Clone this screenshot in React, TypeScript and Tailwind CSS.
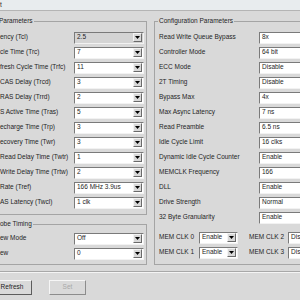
import React from "react";

const leftRows: [string, string][] = [
  ["ency (Tcl)", "2.5"],
  ["cle Time (Trc)", "7"],
  ["fresh Cycle Time (Trfc)", "11"],
  ["CAS Delay (Trcd)", "3"],
  ["RAS Delay (Trrd)", "2"],
  ["S Active Time (Tras)", "5"],
  ["echarge Time (Trp)", "3"],
  ["ecovery Time (Twr)", "3"],
  ["Read Delay Time (Twtr)", "1"],
  ["Write Delay Time (Trtw)", "2"],
  ["Rate (Tref)", "166 MHz 3.9us"],
  ["AS Latency (Twcl)", "1 clk"],
];

const configRows: [string, string][] = [
  ["Read Write Queue Bypass", "8x"],
  ["Controller Mode", "64 bit"],
  ["ECC Mode", "Disable"],
  ["2T Timing", "Disable"],
  ["Bypass Max", "4x"],
  ["Max Async Latency", "7 ns"],
  ["Read Preamble", "6.5 ns"],
  ["Idle Cycle Limit", "16 clks"],
  ["Dynamic Idle Cycle Counter", "Enable"],
  ["MEMCLK Frequency", "166"],
  ["DLL", "Enable"],
  ["Drive Strength", "Normal"],
  ["32 Byte Granularity", "Enable"],
];

function Arrow() {
  return (
    <span className="flex h-[9px] w-[9px] shrink-0 items-center justify-center border border-t-[#f4f4f4] border-l-[#f4f4f4] border-b-[#6a6a6a] border-r-[#6a6a6a] bg-[#d8d8d8] mr-[1px]">
      <svg width="5" height="3" viewBox="0 0 5 3">
        <polygon points="0,0 5,0 2.5,3" fill="#000" />
      </svg>
    </span>
  );
}

function Combo({
  value,
  arrow = true,
  gray = false,
  className = "",
}: {
  value: string;
  arrow?: boolean;
  gray?: boolean;
  className?: string;
}) {
  return (
    <div
      className={`flex h-[12px] items-center border border-t-[#7a7a7a] border-l-[#7a7a7a] border-b-[#f2f2f2] border-r-[#f2f2f2] ${
        gray ? "bg-[#d4d4d4]" : "bg-white"
      } ${className}`}
    >
      <span className="flex-1 overflow-hidden whitespace-nowrap pl-[2px] leading-none">{value}</span>
      {arrow && <Arrow />}
    </div>
  );
}

export default function App() {
  return (
    <div className="flex h-[300px] w-[300px] flex-col overflow-hidden bg-[#d9d9d9] font-['Liberation_Sans',Arial,sans-serif] text-[6.5px] text-[#1e1e1e]">
      {/* title strip */}
      <div className="h-[11px] shrink-0 border-b border-[#b4b4b4] bg-[#e8ecee] pt-[2px] leading-none">t</div>

      <div className="flex shrink-0 pt-[6px]">
        {/* left column */}
        <div className="ml-[-9px] flex w-[156px] shrink-0 flex-col">
          <fieldset className="border border-[#a4a4a4] pb-[4px] pl-[8px] pr-[2px]">
            <legend className="ml-[-2px] px-[1px] leading-[8px]">Parameters</legend>
            <div className="flex flex-col pt-[5px]">
              {leftRows.map(([label, value], i) => (
                <div key={label} className="flex h-[15px] items-center">
                  <span className="flex-1 whitespace-nowrap leading-none">{label}</span>
                  <Combo value={value} gray={i === 0} className="w-[70px]" />
                </div>
              ))}
            </div>
          </fieldset>

          <fieldset className="mt-[5px] border border-[#a4a4a4] pb-[3px] pl-[8px] pr-[2px]">
            <legend className="ml-[-1px] px-[1px] leading-[8px]">obe Timing</legend>
            <div className="flex flex-col pt-[3px]">
              <div className="flex h-[15px] items-center">
                <span className="flex-1 whitespace-nowrap leading-none">ew Mode</span>
                <Combo value="Off" className="w-[70px]" />
              </div>
              <div className="flex h-[15px] items-center">
                <span className="flex-1 whitespace-nowrap leading-none">ew</span>
                <Combo value="0" className="w-[70px]" />
              </div>
            </div>
          </fieldset>
        </div>

        {/* right column */}
        <fieldset className="ml-[7px] w-[185px] shrink-0 border border-[#a4a4a4] pb-[3px] pl-[4px]">
          <legend className="ml-[-1px] px-[1px] leading-[8px]">Configuration Parameters</legend>
          <div className="flex flex-col pt-[5px]">
            {configRows.map(([label, value]) => (
              <div key={label} className="flex h-[15px] items-center">
                <span className="w-[100px] shrink-0 whitespace-nowrap leading-none">{label}</span>
                <Combo value={value} arrow={false} className="w-[75px]" />
              </div>
            ))}
            <div className="mt-[5px] grid grid-cols-[90px_1fr]">
              <div className="flex h-[15px] items-center">
                <span className="w-[40px] shrink-0 whitespace-nowrap leading-none">MEM CLK 0</span>
                <Combo value="Enable" className="h-[11px] w-[39px]" />
              </div>
              <div className="flex h-[15px] items-center">
                <span className="w-[39px] shrink-0 whitespace-nowrap leading-none">MEM CLK 2</span>
                <Combo value="Disable" className="h-[11px] w-[39px]" />
              </div>
              <div className="flex h-[15px] items-center">
                <span className="w-[40px] shrink-0 whitespace-nowrap leading-none">MEM CLK 1</span>
                <Combo value="Enable" className="h-[11px] w-[39px]" />
              </div>
              <div className="flex h-[15px] items-center">
                <span className="w-[39px] shrink-0 whitespace-nowrap leading-none">MEM CLK 3</span>
                <Combo value="Disable" className="h-[11px] w-[39px]" />
              </div>
            </div>
          </div>
        </fieldset>
      </div>

      {/* bottom buttons */}
      <div className="mt-[6px] flex flex-1 flex-col border-t border-[#a8a8a8] shadow-[inset_0_1px_0_#f4f4f4]">
        <div className="mt-[8px] flex items-center gap-[17px] pl-0">
          <button className="ml-[-8px] h-[15px] w-[40px] border border-t-[#f6f6f6] border-l-[#f6f6f6] border-b-[#5c5c5c] border-r-[#5c5c5c] bg-[#d9d9d9] leading-none text-[#1e1e1e]">
            Refresh
          </button>
          <button className="h-[15px] w-[37px] border border-t-[#f6f6f6] border-l-[#f6f6f6] border-b-[#8c8c8c] border-r-[#8c8c8c] bg-[#d9d9d9] leading-none text-[#a8a8a8]">
            Set
          </button>
        </div>
      </div>
    </div>
  );
}
